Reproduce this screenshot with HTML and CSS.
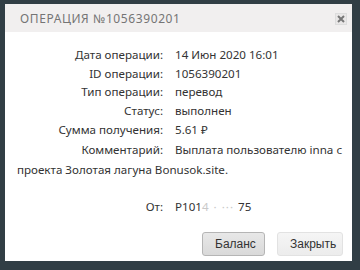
FILE: index.html
```html
<!DOCTYPE html>
<html lang="ru">
<head>
<meta charset="utf-8">
<link rel="stylesheet" href="styles.css">
</head>
<body>
<div class="modal">
  <div class="modal-header">
    <span class="title">Операция №1056390201</span>
    <span class="close">
      <svg width="8" height="8" viewBox="0 0 8 8"><path d="M1 1L7 7M7 1L1 7" stroke="#777" stroke-width="2"/></svg>
    </span>
  </div>
  <div class="modal-body">
    <div class="row"><span class="label">Дата операции:</span><span class="value">14 Июн 2020 16:01</span></div>
    <div class="row"><span class="label">ID операции:</span><span class="value">1056390201</span></div>
    <div class="row"><span class="label">Тип операции:</span><span class="value">перевод</span></div>
    <div class="row"><span class="label">Статус:</span><span class="value">выполнен</span></div>
    <div class="row"><span class="label">Сумма получения:</span><span class="value">5.61 ₽</span></div>
    <div class="row comment"><span class="label">Комментарий:</span><span class="value">Выплата пользователю inna с проекта Золотая лагуна Bonusok.site.</span></div>
    <div class="row from"><span class="label">От:</span><span class="value">P101<span class="blur">4 · ··· </span>75</span></div>
  </div>
  <div class="modal-footer">
    <button class="btn btn-balance">Баланс</button>
    <button class="btn btn-close">Закрыть</button>
  </div>
</div>
</body>
</html>
```

FILE: styles.css
```css
html, body {
  margin: 0;
  padding: 0;
}
body {
  width: 360px;
  height: 270px;
  background: #313e45;
  padding: 4px 8px 9px 5px;
  box-sizing: border-box;
  font-family: "Noto Sans", sans-serif;
  color: #333;
  overflow: hidden;
}
.modal {
  width: 347px;
  height: 257px;
  background: #fff;
  display: flex;
  flex-direction: column;
}
.modal-header {
  height: 28px;
  background: #f1efef;
  display: flex;
  align-items: center;
  justify-content: space-between;
  padding: 0 5px 0 15px;
  box-sizing: border-box;
}
.title {
  text-transform: uppercase;
  font-size: 12px;
  letter-spacing: 0.6px;
  color: #757575;
}
.close {
  width: 12px;
  height: 12px;
  margin-top: 2px;
  background: #e9e7e7;
  border: 1px solid #ddd;
  box-sizing: border-box;
  display: flex;
  align-items: center;
  justify-content: center;
}
.modal-body {
  padding: 14px 2px 0 12px;
  font-size: 11.6px;
  line-height: 18.7px;
  flex: 1;
}
.row .label {
  display: inline-block;
  width: 146px;
  text-align: right;
  margin-right: 12px;
}
.comment {
  line-height: 20px;
}
.from {
  margin-top: 18px;
}
.blur {
  color: #c9c9c9;
  letter-spacing: 1px;
}
.modal-footer {
  display: flex;
  justify-content: flex-end;
  gap: 12px;
  padding: 0 9px 5px 0;
}
.btn {
  font-family: "Liberation Sans", Arial, sans-serif;
  font-size: 12px;
  color: #333;
  height: 24px;
  padding: 0 12px;
  border-radius: 3px;
  border: 1px solid #c4c4c4;
}
.btn-balance {
  width: 63px;
  background: linear-gradient(#e8e8e8, #d9d9d9);
  border-color: #b5b5b5;
}
.btn-close {
  width: 66px;
  background: linear-gradient(#f5f5f5, #ececec);
  border-color: #e2e2e2;
}
```
